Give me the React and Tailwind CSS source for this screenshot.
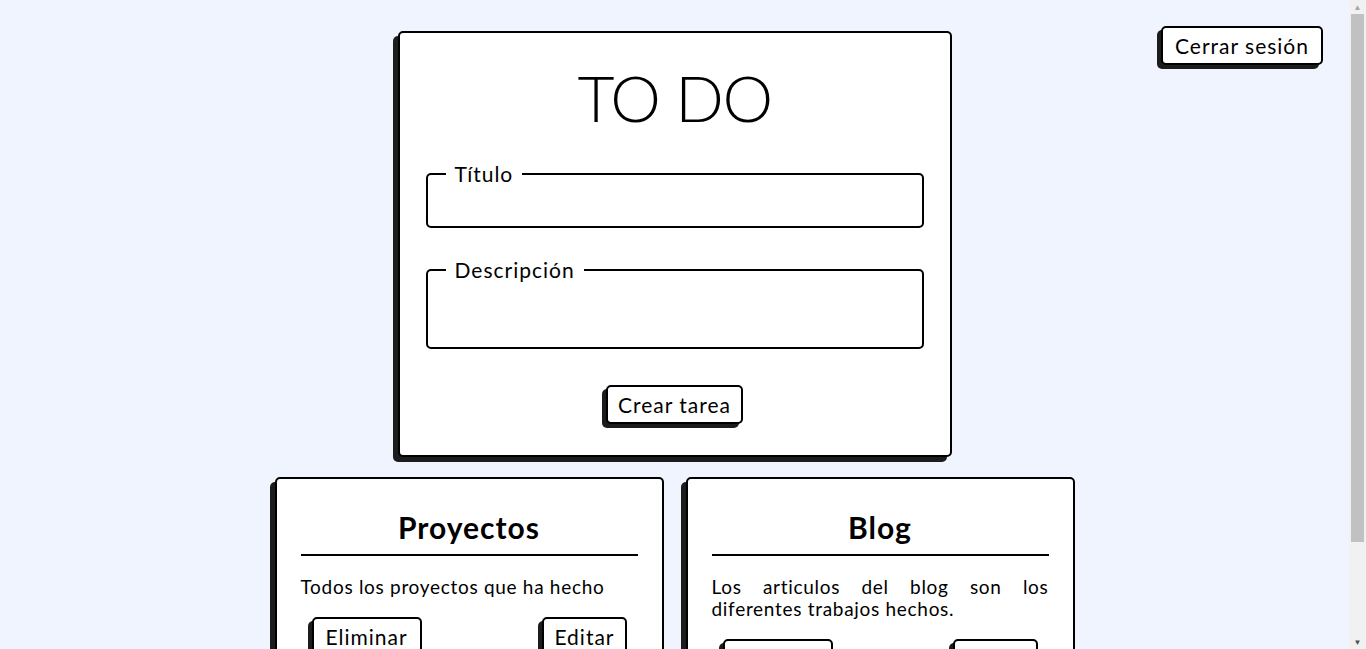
export default function App() {
  const cards = [
    { title: 'Proyectos', text: 'Todos los proyectos que ha hecho' },
    { title: 'Blog', text: 'Los articulos del blog son los diferentes trabajos hechos.' },
  ];

  const btn =
    'bg-white border-2 border-black rounded-[5px] px-[10px] h-[39px] text-[21px] leading-none tracking-[1px] shadow-[-4px_4px_0_#1c1c1c]';

  return (
    <div className="min-h-screen flex bg-[#f0f4ff] text-black font-['Lato',sans-serif]">
      <main className="flex-1 relative pb-10">
        {/* Logout */}
        <button className={`absolute top-[26px] right-[26px] px-[12px] ${btn}`}>Cerrar sesión</button>

        <div className="pt-[31px] flex flex-col items-center">
          {/* Form card */}
          <div className="w-[554px] bg-white border-2 border-black rounded-[5px] shadow-[-5px_5px_0_#1c1c1c] px-[26px] pt-[25px] pb-[31px]">
            <h1 className="text-center text-[64px] font-light leading-[80px] tracking-[-1.5px]">TO DO</h1>

            <fieldset className="mt-[24px] border-2 border-black rounded-[5px] px-[18px] pb-[12px]">
              <legend className="px-[9px] text-[21px] leading-[24px] tracking-[1px]">Título</legend>
              <input className="w-full h-[28px] outline-none bg-transparent" />
            </fieldset>

            <fieldset className="mt-[30px] border-2 border-black rounded-[5px] px-[18px] pb-[10px]">
              <legend className="px-[9px] text-[21px] leading-[24px] tracking-[1px]">Descripción</legend>
              <textarea className="w-full h-[55px] outline-none resize-none bg-transparent block" />
            </fieldset>

            <div className="mt-[36px] flex justify-center">
              <button className={btn}>Crear tarea</button>
            </div>
          </div>

          {/* Section cards */}
          <div className="mt-[20px] flex gap-[22px]">
            {cards.map((card) => (
              <div
                key={card.title}
                className="w-[389px] bg-white border-2 border-black rounded-[5px] shadow-[-5px_5px_0_#1c1c1c] px-[24px] pt-[28px] pb-[30px]"
              >
                <h2 className="text-center text-[30px] font-bold leading-[40px] tracking-[1px]">{card.title}</h2>
                <hr className="mt-[7px] border-t-2 border-black" />
                <p className="mt-[20px] text-[19px] leading-[22px] tracking-[0.7px] text-justify">{card.text}</p>
                <div className="mt-[19px] flex justify-between px-[11px]">
                  <button className={`${btn} px-[12px]`}>Eliminar</button>
                  <button className={btn}>Editar</button>
                </div>
              </div>
            ))}
          </div>
        </div>
      </main>

      {/* Scrollbar */}
      <aside className="w-[17px] h-screen sticky top-0 bg-[#f1f1f1] flex flex-col items-center">
        <div className="h-[14px] flex items-center justify-center text-[8px] leading-none text-[#a3a3a3]">▲</div>
        <div className="w-[13px] h-[528px] bg-[#c1c1c1]" />
        <div className="flex-1" />
        <div className="h-[14px] flex items-center justify-center text-[8px] leading-none text-[#505050]">▼</div>
      </aside>
    </div>
  );
}
